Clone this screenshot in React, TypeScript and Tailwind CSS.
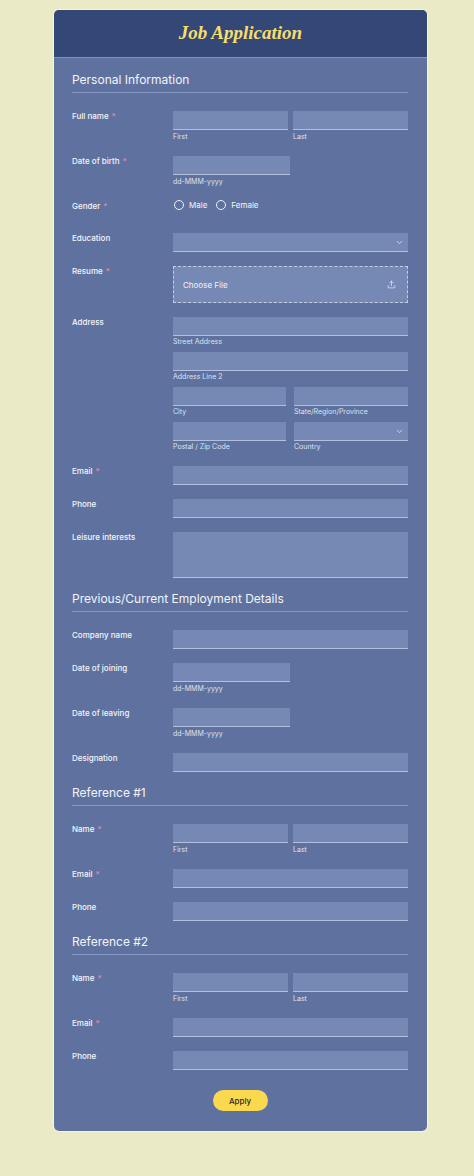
import { ChevronDown, Upload } from 'lucide-react';

const font = { fontFamily: 'Inter, "Liberation Sans", sans-serif' };

function Req() {
  return <span className="ml-[3px] text-[#e58aa6]">*</span>;
}

function Label({ text, required }: { text: string; required?: boolean }) {
  return (
    <div className="w-[101px] shrink-0 text-[8px] leading-[10px] font-medium text-[#f4f5fa]">
      {text}
      {required && <Req />}
    </div>
  );
}

function Input({ className = '', select }: { className?: string; select?: boolean }) {
  return (
    <div
      className={`relative h-[19px] bg-[#7688b4] border-b border-[#b3bfdf] ${className}`}
    >
      {select && (
        <ChevronDown
          className="absolute right-[4px] top-[5px] w-[9px] h-[9px] text-[#e6eaf5]"
          strokeWidth={2}
        />
      )}
    </div>
  );
}

function Sub({ text, tight }: { text: string; tight?: boolean }) {
  return (
    <div className={`${tight ? 'mt-[1px]' : 'mt-[2px]'} h-[10px] text-[7px] leading-[10px] text-[#dde2f0]`}>
      {text}
    </div>
  );
}

function Row({ label, required, children }: { label: string; required?: boolean; children?: React.ReactNode }) {
  return (
    <div className="flex items-start">
      <Label text={label} required={required} />
      <div className="flex-1">{children}</div>
    </div>
  );
}

function Section({ title }: { title: string }) {
  return (
    <div className="border-b border-[#8597c3] pb-[5px] mb-[4px] text-[12px] leading-[14px] text-[#f2f4fa]">
      {title}
    </div>
  );
}

function NameRow({ label }: { label: string }) {
  return (
    <Row label={label} required>
      <div className="flex gap-[5px]">
        <div className="flex-1">
          <Input />
          <Sub text="First" />
        </div>
        <div className="flex-1">
          <Input />
          <Sub text="Last" />
        </div>
      </div>
    </Row>
  );
}

function DateRow({ label, required }: { label: string; required?: boolean }) {
  return (
    <Row label={label} required={required}>
      <Input className="w-[117px]" />
      <Sub text="dd-MMM-yyyy" />
    </Row>
  );
}

function Radio({ text }: { text: string }) {
  return (
    <div className="flex items-center gap-[5px]">
      <span className="w-[10px] h-[10px] rounded-full border border-[#eef0f8]" />
      <span className="text-[8px] leading-[10px] text-[#f4f5fa]">{text}</span>
    </div>
  );
}

export default function App() {
  return (
    <div className="min-h-[1176px] bg-[#ebeac6] pt-[10px] pb-[44px]" style={font}>
      <div className="ml-[54px] w-[373px] rounded-[5px] overflow-hidden bg-[#5f729f] ring-1 ring-[#f6f5e4]">
        {/* Header */}
        <div className="h-[48px] bg-[#334876] border-b border-[#7f91bd] flex items-center justify-center">
          <h1
            className="text-[19px] font-bold italic text-[#f7dd6b]"
            style={{ fontFamily: '"Liberation Serif", "DejaVu Serif", serif' }}
          >
            Job Application
          </h1>
        </div>

        {/* Body */}
        <div className="pl-[18px] pr-[19px] pt-[15px] pb-[20px] flex flex-col gap-[14px]">
          <Section title="Personal Information" />
          <NameRow label="Full name" />
          <DateRow label="Date of birth" required />
          <Row label="Gender" required>
            <div className="h-[19px] flex items-start gap-[9px] pl-[1px] -mt-[1px]">
              <Radio text="Male" />
              <Radio text="Female" />
            </div>
          </Row>
          <Row label="Education">
            <Input select />
          </Row>
          <Row label="Resume" required>
            <div className="h-[37px] bg-[#7688b4] border border-dashed border-[#c4cde6] flex items-center justify-between pl-[9px] pr-[11px]">
              <span className="text-[8px] text-[#f2f4fa]">Choose File</span>
              <Upload className="w-[9px] h-[9px] text-[#e6eaf5]" strokeWidth={2} />
            </div>
          </Row>
          <Row label="Address">
            <div className="flex flex-col gap-[5px]">
              <div>
                <Input />
                <Sub text="Street Address" tight />
              </div>
              <div>
                <Input />
                <Sub text="Address Line 2" tight />
              </div>
              <div className="flex gap-[8px]">
                <div className="w-[113px]">
                  <Input />
                  <Sub text="City" tight />
                </div>
                <div className="flex-1">
                  <Input />
                  <Sub text="State/Region/Province" tight />
                </div>
              </div>
              <div className="flex gap-[8px]">
                <div className="w-[113px]">
                  <Input />
                  <Sub text="Postal / Zip Code" tight />
                </div>
                <div className="flex-1">
                  <Input select />
                  <Sub text="Country" tight />
                </div>
              </div>
            </div>
          </Row>
          <Row label="Email" required>
            <Input />
          </Row>
          <Row label="Phone">
            <Input />
          </Row>
          <Row label="Leisure interests">
            <div className="h-[46px] bg-[#7688b4] border-b border-[#b3bfdf]" />
          </Row>

          <Section title="Previous/Current Employment Details" />
          <Row label="Company name">
            <Input />
          </Row>
          <DateRow label="Date of joining" />
          <DateRow label="Date of leaving" />
          <Row label="Designation">
            <Input />
          </Row>

          <Section title="Reference #1" />
          <NameRow label="Name" />
          <Row label="Email" required>
            <Input />
          </Row>
          <Row label="Phone">
            <Input />
          </Row>

          <Section title="Reference #2" />
          <NameRow label="Name" />
          <Row label="Email" required>
            <Input />
          </Row>
          <Row label="Phone">
            <Input />
          </Row>

          <div className="flex justify-center mt-[6px]">
            <button className="w-[55px] h-[21px] rounded-full bg-[#fbd94f] text-[8px] font-medium text-[#2a2a2a]">
              Apply
            </button>
          </div>
        </div>
      </div>
    </div>
  );
}
